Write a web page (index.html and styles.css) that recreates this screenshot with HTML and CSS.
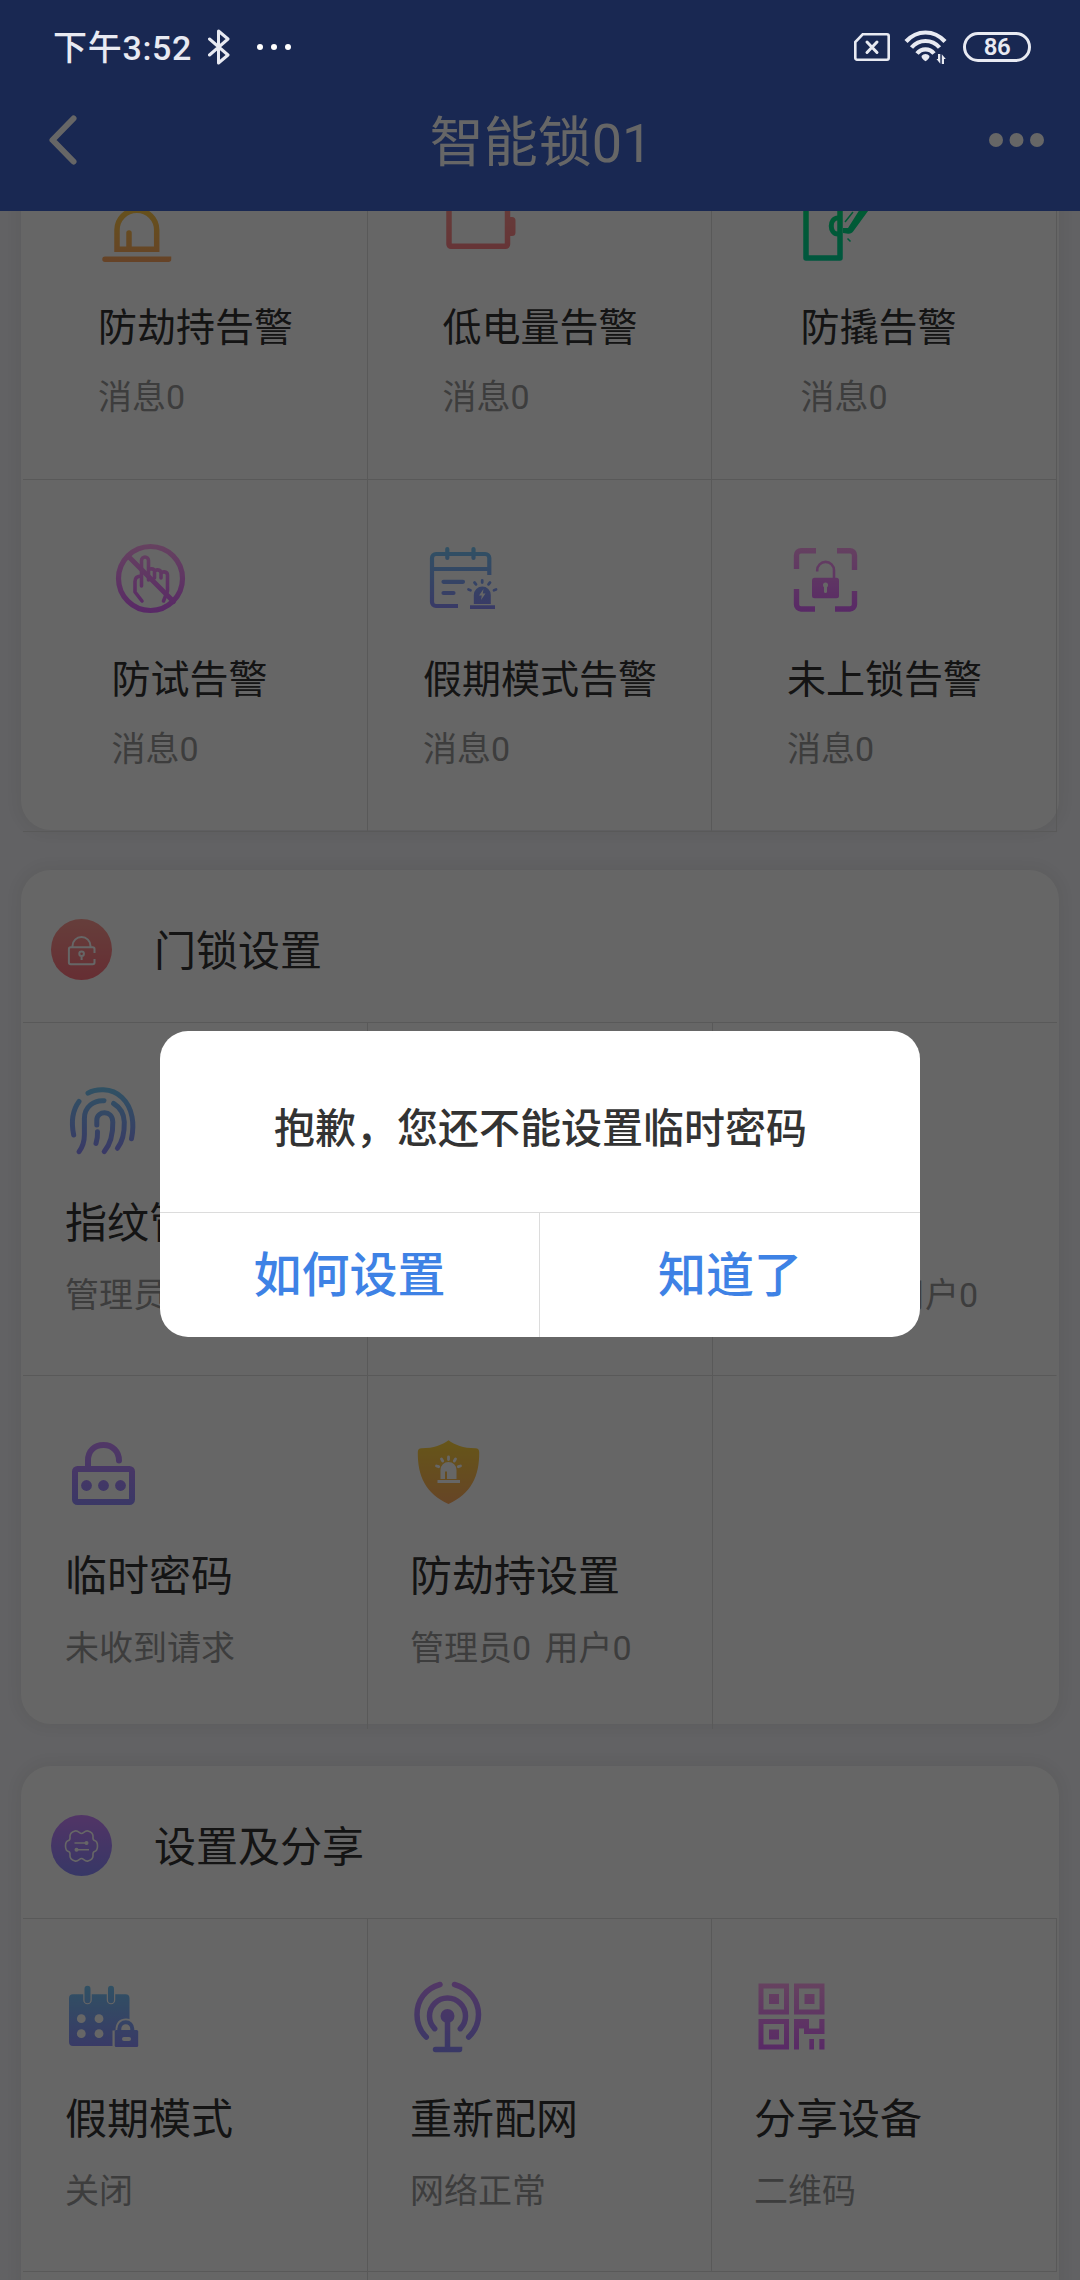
FILE: index.html
```html
<!DOCTYPE html>
<html lang="zh-CN">
<head>
<meta charset="utf-8">
<title>智能锁01</title>
<link rel="stylesheet" href="styles.css">
</head>
<body>
<svg class="defs" width="0" height="0" aria-hidden="true">
  <defs>
    <linearGradient id="gold" gradientUnits="userSpaceOnUse" x1="0" y1="4" x2="0" y2="73"><stop offset="0" stop-color="#ffd63e"/><stop offset="1" stop-color="#ffa862"/></linearGradient>
    <linearGradient id="red" gradientUnits="userSpaceOnUse" x1="0" y1="4" x2="0" y2="73"><stop offset="0" stop-color="#ff9c94"/><stop offset="1" stop-color="#ff7f86"/></linearGradient>
    <linearGradient id="green" gradientUnits="userSpaceOnUse" x1="0" y1="4" x2="0" y2="73"><stop offset="0" stop-color="#00e676"/><stop offset="1" stop-color="#00d99c"/></linearGradient>
    <linearGradient id="pink" gradientUnits="userSpaceOnUse" x1="0" y1="4" x2="0" y2="73"><stop offset="0" stop-color="#ffa6f0"/><stop offset="1" stop-color="#dc66ff"/></linearGradient>
    <linearGradient id="blue" gradientUnits="userSpaceOnUse" x1="0" y1="4" x2="0" y2="73"><stop offset="0" stop-color="#78ccf8"/><stop offset="1" stop-color="#908cff"/></linearGradient>
    <linearGradient id="violet" gradientUnits="userSpaceOnUse" x1="0" y1="4" x2="0" y2="73"><stop offset="0" stop-color="#cc8aff"/><stop offset="1" stop-color="#8f8cff"/></linearGradient>
    <linearGradient id="badge-red" x1="0" y1="0" x2="0" y2="1"><stop offset="0" stop-color="#ff9c94"/><stop offset="1" stop-color="#ff7380"/></linearGradient>
    <linearGradient id="badge-violet" x1="0" y1="0" x2="0" y2="1"><stop offset="0" stop-color="#cc84ff"/><stop offset="1" stop-color="#8a8aff"/></linearGradient>
  </defs>
</svg>

<div class="screen">
  <header class="app-bar">
    <div class="status">
      <span class="time">下午3:52</span>
      <svg class="bluetooth" width="22" height="36" viewBox="0 0 22 36"><path d="M1.5 10 20 26l-9.5 8V2L20 10 1.5 26" fill="none" stroke="#e8eaf2" stroke-width="3" stroke-linejoin="round" stroke-linecap="round"/></svg>
      <svg class="more-dots" width="36" height="8" viewBox="0 0 36 8" fill="#fff"><circle cx="4" cy="4" r="3"/><circle cx="18" cy="4" r="3"/><circle cx="32" cy="4" r="3"/></svg>
      <svg class="sim" width="36" height="28" viewBox="0 0 36 28" fill="none" stroke="#e8eaf2"><path d="M8.7 1.3H33a1.7 1.7 0 0 1 1.7 1.7v22a1.7 1.7 0 0 1-1.7 1.7H3A1.7 1.7 0 0 1 1.3 25V9z" stroke-width="2.6"/><path d="m13 9 10 10.500M23 9 13 19.500" stroke-width="3" stroke-linecap="round"/></svg>
      <svg class="wifi" width="44" height="34" viewBox="0 0 44 34"><g fill="none" stroke="#e8eaf2" stroke-width="4.200"><path d="M2 11.500C13-.5 30-.5 41 11.500"/><path d="M7.500 17.500c7.500-8.700 20.500-8.700 28 0"/><path d="M13 23.500c4.500-5.500 12.500-5.500 17 0"/></g><path d="M17.500 26c2-2.700 6-2.700 8 0 0 2.500-2 4-4 5.300-2-1.300-4-2.800-4-5.300z" fill="#e8eaf2"/><path d="M34 24h2.300v9.700L32.500 29H34zm6 10h-2.200v-9.700l4 4.700H40z" fill="#e8eaf2"/></svg>
      <span class="battery">86</span>
    </div>
    <nav class="nav">
      <svg class="back" width="32" height="54" viewBox="0 0 32 54"><path d="M26.500 5.500 5.500 27l21 21.500" fill="none" stroke="#fff" stroke-width="6" stroke-linecap="round" stroke-linejoin="round"/></svg>
      <h1 class="nav-title">智能锁01</h1>
      <svg class="menu" width="56" height="16" viewBox="0 0 56 16" fill="#fff"><circle cx="7" cy="8" r="7"/><circle cx="27.500" cy="8" r="7"/><circle cx="48" cy="8" r="7"/></svg>
    </nav>
  </header>

  <main class="content">
    <section class="card alerts">
      <div class="grid">
        <div class="cell"><div class="item">
          <svg class="icon" viewBox="0 0 77 77" fill="none" stroke="url(#gold)" stroke-width="5.500"><path d="M19 61.300V42a19.800 19.800 0 0 1 39.700 0v19.300z"/><path d="M31 45v16" stroke-linecap="round"/><path d="M7 71.200h63.500v.01" stroke-linecap="round"/></svg>
          <p class="title">防劫持告警</p><p class="sub">消息0</p>
        </div></div>
        <div class="cell"><div class="item">
          <svg class="icon" viewBox="0 0 77 77"><rect x="7" y="18" width="58.500" height="40.300" rx="2" fill="none" stroke="url(#red)" stroke-width="5.500"/><path d="M67 29h3a3.500 3.500 0 0 1 3.500 3.500v12A3.500 3.500 0 0 1 70 48h-3z" fill="url(#red)"/></svg>
          <p class="title">低电量告警</p><p class="sub">消息0</p>
        </div></div>
        <div class="cell edge"><div class="item">
          <svg class="icon" viewBox="0 0 77 77"><g fill="none" stroke="url(#green)"><path d="M39 14H5v56h34z" stroke-width="5.500" stroke-linejoin="round"/><path d="M39 46h-2c-9 0-9-16 0-16h2" stroke-width="5"/><path d="m44 34 8-10M46.500 50.500l3 3" stroke-width="1.500"/></g><path d="M42 40h5L59 21h9.500L52.500 43c-1.500 2-3 3-5.500 2.700l-5-.7z" fill="url(#green)"/></svg>
          <p class="title">防撬告警</p><p class="sub">消息0</p>
        </div></div>

        <div class="cell last"><div class="item">
          <svg class="icon" viewBox="0 0 77 77" fill="none" stroke="url(#pink)" stroke-linecap="round" stroke-linejoin="round"><circle cx="38.500" cy="38.500" r="32" stroke-width="5.200"/><path d="m16 16 45.500 45.500" stroke-width="5"/><path d="M29.500 46V20.500a3.500 3.500 0 0 1 7 0V40M36.500 33v-2.500c0-2.500 6-2.500 6 .5v7M42.500 32c0-3 6.500-3 6.500 1v5M49 34c0-3 6.500-3 6.500 1v16l-4 10M29.500 36c-4 0-6.500 2-6.500 5.500V52l7 9" stroke-width="3.600"/></svg>
          <p class="title">防试告警</p><p class="sub">消息0</p>
        </div></div>
        <div class="cell last"><div class="item">
          <svg class="icon" viewBox="0 0 77 77"><g fill="none" stroke="url(#blue)" stroke-width="4.200"><path d="M66.300 35V18a4 4 0 0 0-4-4H13a4 4 0 0 0-4 4v44a4 4 0 0 0 4 4h22M9 29h57"/><path d="M24.300 9v9M50.500 9v9M20.500 41.800H40M20.500 53H30.500" stroke-linecap="round"/><path d="M59.200 40.500v2M51.500 42.500l1.500 1.800M67 42.500l-1.500 1.800M45.500 49.500l2 .7M73 49.500l-2 .7" stroke-width="2.800" stroke-linecap="round"/></g><path d="M50.800 64v-9a8.500 8.500 0 0 1 17 0v9zM47 65.300h25V69H47z" fill="url(#blue)"/><path d="m60.500 49-4.500 6.500h2.800L58 60l4.500-6.500h-2.700z" fill="#fff"/></svg>
          <p class="title">假期模式告警</p><p class="sub">消息0</p>
        </div></div>
        <div class="cell last edge"><div class="item">
          <svg class="icon" viewBox="0 0 77 77"><path d="M29 10.700H14a4.500 4.500 0 0 0-4.500 4.500V29M50 10.700h13a4.500 4.500 0 0 1 4.500 4.500V30M28 69H14a4.500 4.500 0 0 1-4.500-4.500V49M48 69h15a4.500 4.500 0 0 0 4.500-4.500V51" fill="none" stroke="url(#pink)" stroke-width="5.400"/><path d="M30.200 31.500v-1.200a8.400 8.400 0 0 1 16.800 0V39" fill="none" stroke="url(#pink)" stroke-width="2.600"/><rect x="25" y="37.700" width="27" height="20.500" rx="2.500" fill="url(#pink)"/><path d="M38.500 44.500v7" stroke="#fff" stroke-width="3" stroke-linecap="round"/><circle cx="38.500" cy="45" r="2.500" fill="#fff"/></svg>
          <p class="title">未上锁告警</p><p class="sub">消息0</p>
        </div></div>
      </div>
    </section>

    <section class="card settings">
      <div class="card-head">
        <svg class="badge" viewBox="0 0 61 61"><circle cx="30.500" cy="30.500" r="30.500" fill="url(#badge-red)"/><g fill="none" stroke="#fff" stroke-width="2"><path d="M43.500 34v-4a1.800 1.800 0 0 0-1.800-1.800h-22a1.800 1.800 0 0 0-1.800 1.800v13.500a1.800 1.800 0 0 0 1.800 1.800h22a1.800 1.800 0 0 0 1.800-1.800V40M21.500 28v-1a9 9 0 0 1 18 0v1"/><circle cx="30.600" cy="34.800" r="2.300"/><path d="M30.600 37.500V41"/></g></svg>
        <h2 class="card-title">门锁设置</h2>
      </div>
      <div class="grid">
        <div class="cell">
          <svg class="icon" viewBox="0 0 77 77" fill="none" stroke="url(#blue)" stroke-width="5" stroke-linecap="round"><path d="M23 10.200C30 6 46 4 57 14.500c11 10.500 12.500 27 9.500 41.200M14 18.500C7 28 6 39 8.700 52M39 17.700c-10-.7-19.600 6-19.600 17.800v16c0 7-1.400 12-5.400 17.200M48.600 20.500C56 25 59 31 59.300 39c.2 9-1.300 19-6.900 26.300M31.800 42v-5c0-9.500 15.700-10.500 16 2 .3 12-1.800 21.500-8.600 29.700M32.500 48.700c.2 4-.2 8-1.500 11.600"/></svg>
          <p class="title">指纹管理</p><p class="sub">管理员0</p>
        </div>
        <div class="cell"></div>
        <div class="cell">
          <p class="sub users">用户0</p>
        </div>

        <div class="cell last">
          <svg class="icon" viewBox="0 0 77 77"><g fill="none" stroke="url(#violet)" stroke-width="6"><rect x="10" y="33" width="57" height="33" rx="2.500"/><path d="M23 33v-8.500c0-9.500 6.500-15.500 15.500-15.500S54 15.500 54 24.500" stroke-linecap="round"/></g><g fill="url(#violet)"><circle cx="21.500" cy="49.500" r="5.400"/><circle cx="38.500" cy="49.500" r="5.400"/><circle cx="55.500" cy="49.500" r="5.400"/></g></svg>
          <p class="title">临时密码</p><p class="sub">未收到请求</p>
        </div>
        <div class="cell last">
          <svg class="icon" viewBox="0 0 77 77"><path d="M38.500 4.300C45 9 53 12.300 65.500 12.300c2.500 0 3.700 1.500 3.700 4C69.500 40 61 58 38.500 68 16 58 7.500 40 7.800 16.300c0-2.500 1.200-4 3.700-4C24 12.300 32 9 38.500 4.300z" fill="url(#gold)"/><path d="M30.500 43V34a8 8 0 0 1 16 0v9H37v-7.500h-2V43zM27.500 44h22.500v3H27.500z" fill="#fff"/><path d="M38.500 21v2.500M31.500 23l1.200 2M45.500 23l-1.200 2M26.500 30l2.200.7M50.500 30l-2.200.7" stroke="#fff" stroke-width="2.800" stroke-linecap="round"/></svg>
          <p class="title">防劫持设置</p><p class="sub">管理员0 用户0</p>
        </div>
        <div class="cell last"></div>
      </div>
    </section>

    <section class="card sharing">
      <div class="card-head">
        <svg class="badge" viewBox="0 0 61 61"><circle cx="30.500" cy="30.500" r="30.500" fill="url(#badge-violet)"/><path d="M30.500 18.500c2 0 3.500-3.500 6.500-2.500s5 2.500 5 5-.5 4 1.500 4.500 3 2.500 3 5.500-1 5-3 5.500-1.500 2-1.500 4.500-2 4-5 5-4.500-2.500-6.500-2.500-3.500 3.500-6.500 2.500-5-2.500-5-5 .5-4-1.500-4.500-3-2.500-3-5.500 1-5 3-5.500 1.500-2 1.500-4.500 2-4 5-5 4.500 2.500 6.500 2.500z" fill="none" stroke="#fff" stroke-width="1.600"/><path d="M23.500 28H35M26 34.700h12" stroke="#fff" stroke-width="1.600"/><circle cx="35.500" cy="28" r="2" fill="#fff"/><circle cx="25.500" cy="34.700" r="2" fill="#fff"/></svg>
        <h2 class="card-title">设置及分享</h2>
      </div>
      <div class="grid">
        <div class="cell">
          <svg class="icon" viewBox="0 0 77 77"><path d="M8 15.300h52.500a4 4 0 0 1 4 4V67H8a4 4 0 0 1-4-4V19.300a4 4 0 0 1 4-4z" fill="url(#blue)"/><g fill="none" stroke-linecap="round"><path d="M22.500 10v11M46 10v11" stroke="#fff" stroke-width="8.500"/><path d="M22.500 9.800v11.400M46 9.800v11.400v.01" stroke="url(#blue)" stroke-width="6"/></g><path d="M47.500 68V51.500h3C50.500 43 55 39.500 61 39.500s10.500 4 10.500 12h4V68z" fill="#fff"/><path d="M54.300 52v-2.200a6.500 6.500 0 0 1 13 0V52" fill="none" stroke="url(#blue)" stroke-width="4"/><rect x="49.700" y="51" width="23.500" height="17" rx="1.500" fill="url(#blue)"/><g fill="#fff"><rect x="57" y="58" width="9" height="4" rx="2"/><circle cx="16.300" cy="39.700" r="4.400"/><circle cx="34" cy="39.700" r="4.400"/><circle cx="16.300" cy="54.700" r="4.400"/><circle cx="34" cy="54.700" r="4.400"/></g></svg>
          <p class="title">假期模式</p><p class="sub">关闭</p>
        </div>
        <div class="cell">
          <svg class="icon" viewBox="0 0 77 77" fill="none" stroke="url(#violet)" stroke-width="5.500" stroke-linecap="round"><path d="M30 5.500C15 9.500 7 22 7 35.500c0 8.500 3 16.500 9.300 22.500M44.500 5.500C59.500 9.500 68.500 22 68.500 35.500c0 8.500-3.500 16.500-9.800 22.500M24.700 49.700a18 18 0 1 1 25.600 0M37.500 44v26.500M25.500 70.600h24v.01"/><circle cx="37.500" cy="37" r="7" fill="url(#violet)" stroke="none"/></svg>
          <p class="title">重新配网</p><p class="sub">网络正常</p>
        </div>
        <div class="cell edge">
          <svg class="icon" viewBox="0 0 77 77"><g fill="none" stroke="url(#pink)" stroke-width="5"><path d="M7 7h25.500v26H7zM42.500 7H68v26H42.500zM7 42.500h25.500V68H7z"/></g><path d="M15 15h10v10H15zM50.500 15h10v10h-10zM15 50.500h10v10H15zM40 40h15v9.500h10.300V40h5.200v15H50v-5.500h-5v21h-5zM55.300 60H60v10.500h-4.700zM65.300 60h5.200v10.500h-5.200z" fill="url(#pink)"/></svg>
          <p class="title">分享设备</p><p class="sub">二维码</p>
        </div>
        <div class="cell"></div>
      </div>
    </section>
  </main>

  <div class="overlay">
    <div class="dialog" role="alertdialog">
      <p class="message">抱歉，您还不能设置临时密码</p>
      <div class="actions">
        <button class="action">如何设置</button>
        <button class="action">知道了</button>
      </div>
    </div>
  </div>
</div>
</body>
</html>
```
FILE: styles.css
```css
* {
  box-sizing: border-box;
}

body,
h1,
h2,
p {
  margin: 0;
}

body {
  font-family: Roboto, "Noto Sans CJK SC", sans-serif;
  color: #333;
}

.defs {
  position: absolute;
}

.screen {
  position: relative;
  display: flex;
  flex-direction: column;
  width: 1080px;
  height: 2280px;
  overflow: hidden;
  background: #f5f5fa;
}

/* App bar */
.app-bar {
  flex: none;
  height: 211px;
  background: #3f64cd;
}

/* The system status bar stays bright above the dimmed page */
.status {
  position: relative;
  z-index: 2;
  display: flex;
  align-items: center;
  height: 94px;
  padding: 0 49px 0 53px;
  color: #e8eaf2;
}

.time {
  width: 155px;
  padding-bottom: 3px;
  font-size: 34px;
  font-weight: 500;
  letter-spacing: 0.7px;
  white-space: nowrap;
}

.more-dots {
  margin-left: 26px;
}

.sim {
  margin-left: auto;
}

.wifi {
  margin-left: 14px;
}

.battery {
  display: flex;
  align-items: center;
  justify-content: center;
  width: 68px;
  height: 30px;
  margin-left: 15px;
  border: 3px solid #e8eaf2;
  border-radius: 15px;
  font-size: 24px;
  font-weight: 600;
  letter-spacing: -0.5px;
}

.nav {
  display: flex;
  align-items: center;
  justify-content: space-between;
  height: 92px;
  padding: 0 35px 0 47px;
}

.nav-title {
  margin-left: 14px;
  padding-top: 7px;
  font-size: 54px;
  font-weight: 400;
  line-height: 80px;
  color: #fff;
}

/* Cards */
.content {
  flex: 1;
  min-height: 0;
  overflow: hidden;
}

.card {
  width: 1038px;
  margin: 0 auto;
  padding: 0 2px;
  border-radius: 30px;
  background: #fff;
  box-shadow: 0 0 12px 7px rgba(90, 90, 60, 0.06);
}

.alerts {
  height: 702px;
  margin-top: -83px;
}

.settings {
  height: 854px;
  margin-top: 40px;
}

.sharing {
  height: 900px;
  margin-top: 42px;
}

.card-head {
  display: flex;
  align-items: center;
  gap: 42px;
  height: 153px;
  padding: 6px 28px 0;
  border-bottom: 1px solid #dedede;
}

.badge {
  width: 61px;
  height: 61px;
}

.card-title {
  padding-top: 5px;
  font-size: 42px;
  font-weight: 400;
  line-height: 60px;
}

.grid {
  display: grid;
  grid-template-columns: 345px 344px 345px;
  grid-auto-rows: 353px;
}

.alerts .grid {
  grid-auto-rows: 352px;
}

.settings .grid {
  grid-template-columns: 345px 345px 344px;
}

.cell {
  display: flex;
  flex-direction: column;
  align-items: flex-start;
  padding: 60px 0 0 42px;
  border-right: 1px solid #dedede;
  border-bottom: 1px solid #dedede;
}

.cell:nth-child(3n):not(.edge) {
  border-right-color: transparent;
}

.settings .last {
  border-bottom: 0;
}

.alerts .cell {
  align-items: center;
  padding-left: 1px;
}

.item {
  min-width: 168px;
}

.icon {
  display: block;
  width: 77px;
  height: 77px;
}

.title {
  margin-top: 36px;
  font-size: 42px;
  line-height: 56px;
  white-space: nowrap;
}

.sub {
  margin-top: 21px;
  font-size: 34px;
  line-height: 44px;
  word-spacing: 5px;
  white-space: nowrap;
  color: #999;
}

.sub.users {
  margin: 190px 0 0 136px;
}

.alerts .title {
  margin-top: 35px;
  font-size: 39px;
}

.alerts .sub {
  margin-top: 19px;
}

/* Dialog */
.overlay {
  position: absolute;
  inset: 0;
  z-index: 1;
  display: flex;
  justify-content: center;
  align-items: flex-start;
  padding-top: 1031px;
  background: rgba(0, 0, 0, 0.6);
}

.dialog {
  width: 760px;
  height: 306px;
  overflow: hidden;
  border-radius: 28px;
  background: #fff;
}

.message {
  height: 181px;
  padding: 68px 0 0 1px;
  font-size: 41px;
  font-weight: 500;
  line-height: 60px;
  text-align: center;
}

.actions {
  display: grid;
  grid-template-columns: 379px 381px;
  height: 125px;
  border-top: 1px solid #dcdcdc;
}

.action {
  padding: 2px 0 0;
  border: 0;
  background: none;
  font: 500 48px/70px Roboto, "Noto Sans CJK SC", sans-serif;
  color: #3e82e5;
}

.action + .action {
  border-left: 1px solid #dcdcdc;
}
```
